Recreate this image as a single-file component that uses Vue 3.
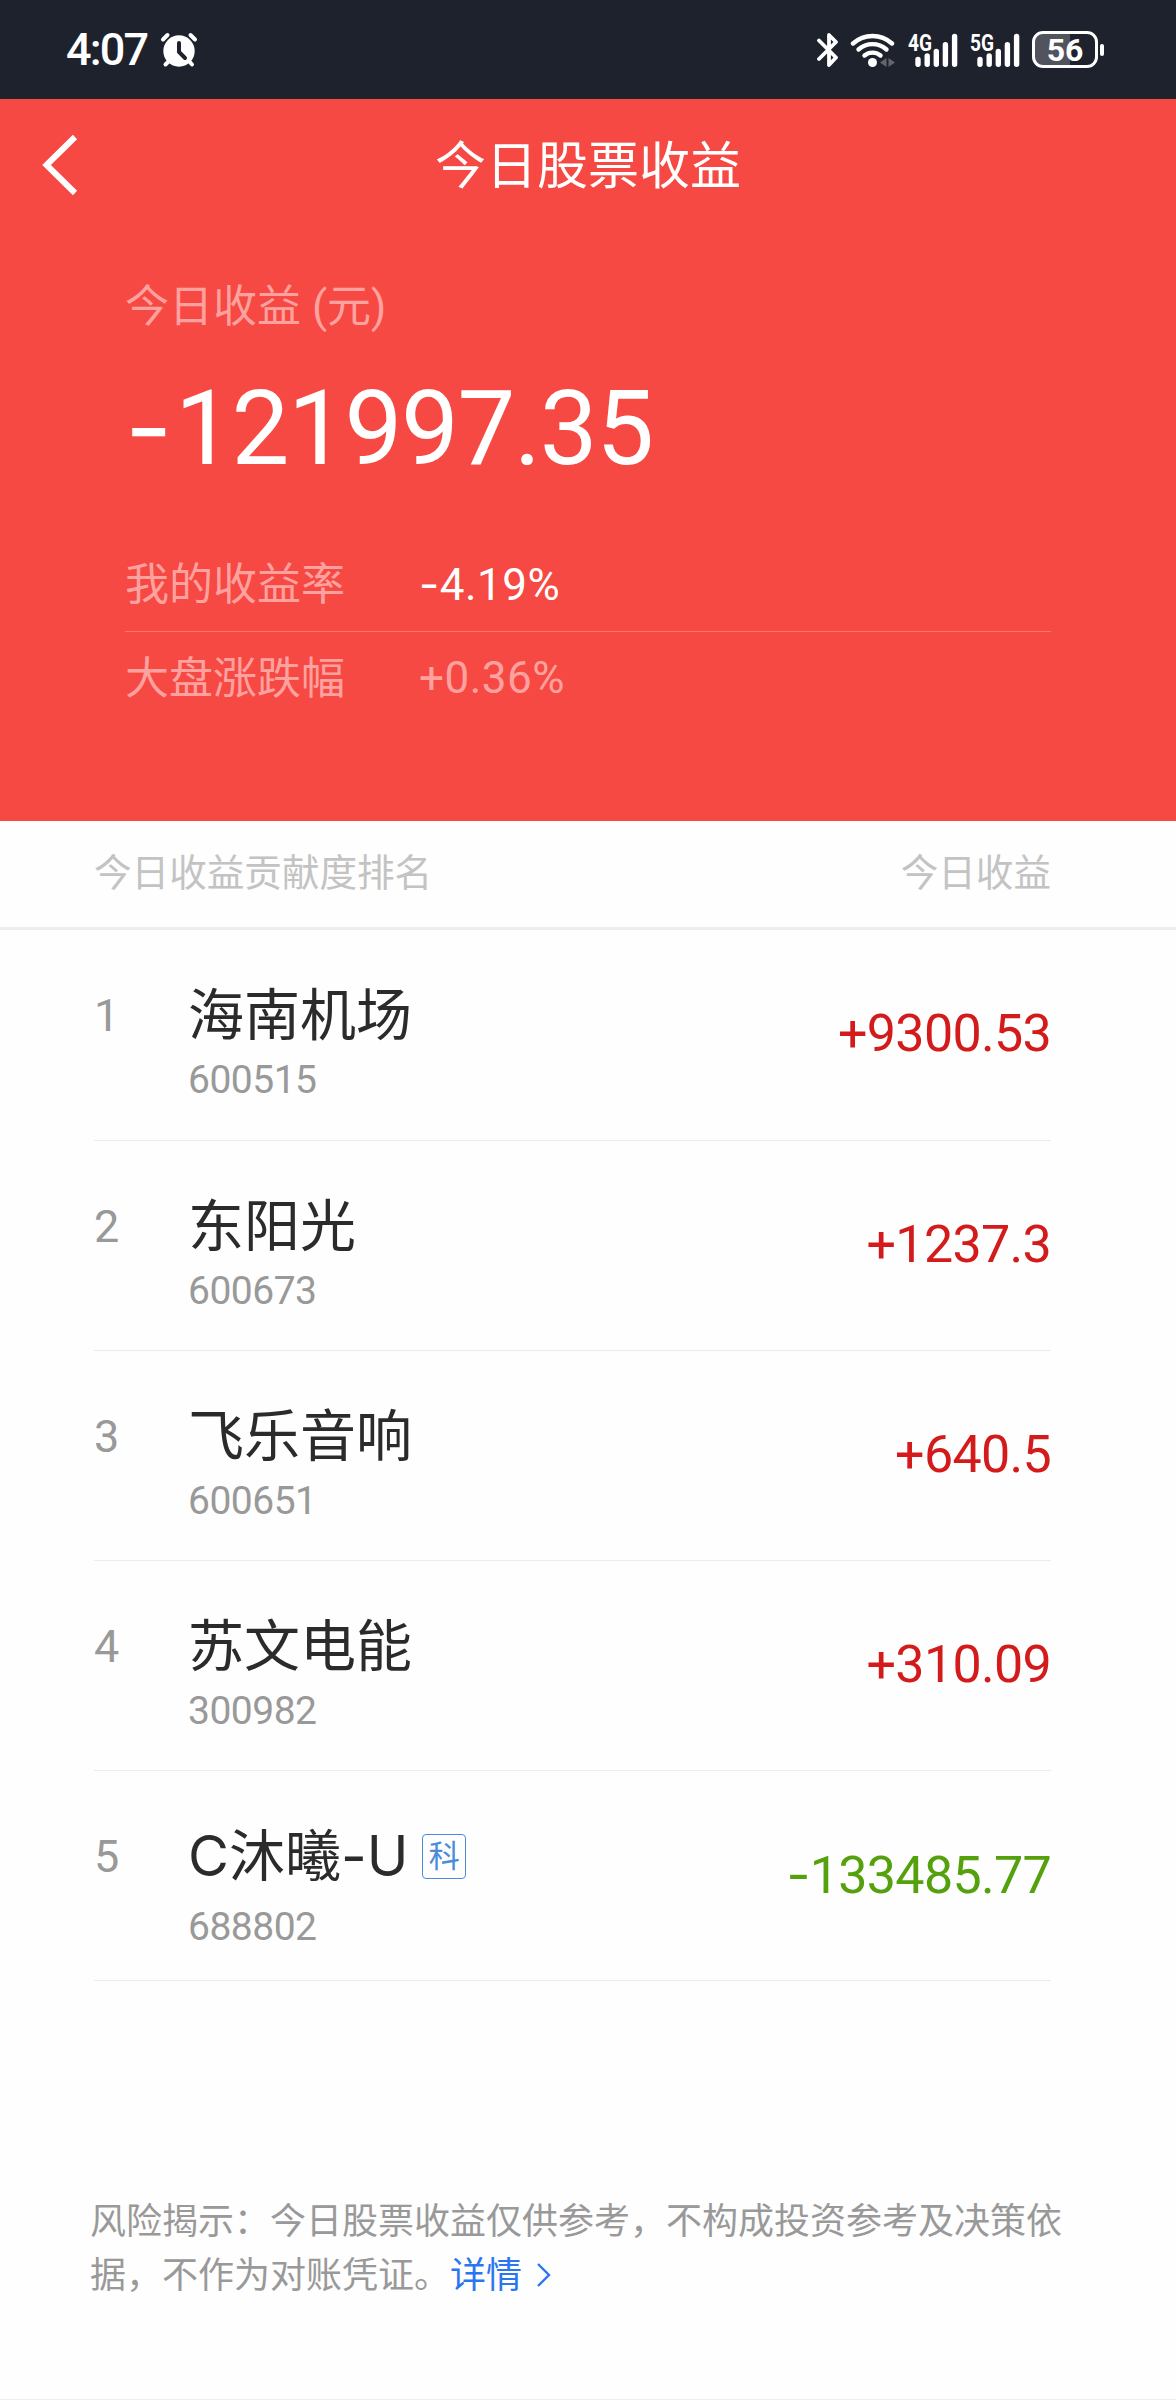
<script setup>
const rates = [
  { label: '我的收益率', sign: '-', value: '4.19%', muted: false },
  { label: '大盘涨跌幅', sign: '+', value: '0.36%', muted: true },
]

const stocks = [
  { name: '海南机场', code: '600515', sign: '+', profit: '9300.53' },
  { name: '东阳光', code: '600673', sign: '+', profit: '1237.3' },
  { name: '飞乐音响', code: '600651', sign: '+', profit: '640.5' },
  { name: '苏文电能', code: '300982', sign: '+', profit: '310.09' },
  { name: 'C沐曦-U', code: '688802', sign: '-', profit: '133485.77', tag: '科' },
]

const networks = ['4G', '5G']
</script>

<template>
  <div class="page">
    <header class="status">
      <span class="time">4:07</span>
      <svg class="alarm" width="38" height="36" viewBox="0 0 38 36">
        <g stroke="#fff" stroke-width="4" stroke-linecap="round">
          <path d="M3 7.5L7.5 3M30.5 3L35 7.5M9 29L5.5 32.5M29 29L32 32.5" />
        </g>
        <circle cx="19" cy="19" r="15.7" fill="#fff" />
        <path d="M19 11V20L25 26" fill="none" stroke="#1e222d" stroke-width="4" stroke-linecap="round" />
      </svg>
      <div class="status-right">
        <svg class="bluetooth" width="22" height="36" viewBox="0 0 22 36">
          <path d="M2 8.5L19 25.5L12 33V3L19 10L2 27" fill="none" stroke="#fff" stroke-width="3.8" stroke-linecap="round" stroke-linejoin="round" />
        </svg>
        <svg class="wifi" width="46" height="36" viewBox="0 0 46 36">
          <g fill="none" stroke="#fff" stroke-width="4.4" stroke-linecap="round">
            <path d="M3 11.5A29 29 0 0 1 42 11.5" />
            <path d="M8.5 17.5A21 21 0 0 1 36.5 17.5" />
            <path d="M14.5 23.5A12.5 12.5 0 0 1 30.5 23.5" />
          </g>
          <circle cx="22.5" cy="30.5" r="4.5" fill="#fff" />
          <path d="M36.5 26V35L30 30.5ZM38.5 26V35L45 30.5Z" fill="#62656d" />
        </svg>
        <svg v-for="net in networks" :key="net" class="signal" width="50" height="48" viewBox="0 -6 50 48">
          <text x="0" y="18.5" textLength="24" lengthAdjust="spacingAndGlyphs">{{ net }}</text>
          <g stroke="#fff" stroke-width="5.4" stroke-linecap="round">
            <path d="M10 27.5V32.2M19.2 24V32.2M28.3 19.5V32.2M37.4 12.8V32.2M46.6 4.5V32.2" />
          </g>
        </svg>
        <div class="battery">
          <div class="cell">56</div>
          <div class="nub"></div>
        </div>
      </div>
    </header>

    <section class="hero">
      <div class="nav">
        <svg class="back" width="40" height="62" viewBox="0 0 40 62">
          <path d="M34 3L5.5 31L34 59" fill="none" stroke="#fff" stroke-width="6" />
        </svg>
        <h1>今日股票收益</h1>
      </div>
      <div class="summary">
        <div class="label">今日收益 (元)</div>
        <div class="total"><span class="minus">-</span>121997.35</div>
        <div v-for="rate in rates" :key="rate.label" class="rate" :class="{ muted: rate.muted }">
          <span class="rate-label">{{ rate.label }}</span>
          <span class="rate-value"><span :class="{ minus: rate.sign === '-' }">{{ rate.sign }}</span>{{ rate.value }}</span>
        </div>
      </div>
    </section>

    <div class="list-head">
      <span>今日收益贡献度排名</span>
      <span>今日收益</span>
    </div>

    <ul class="list">
      <li v-for="(stock, index) in stocks" :key="stock.code" class="row">
        <span class="rank">{{ index + 1 }}</span>
        <div class="stock">
          <div class="name">
            <span>{{ stock.name }}</span>
            <span v-if="stock.tag" class="tag">{{ stock.tag }}</span>
          </div>
          <div class="code" :class="{ lower: stock.tag }">{{ stock.code }}</div>
        </div>
        <div class="profit" :class="{ loss: stock.sign === '-' }">
          <span :class="{ minus: stock.sign === '-' }">{{ stock.sign }}</span>{{ stock.profit }}
        </div>
      </li>
    </ul>

    <footer class="risk">
      风险揭示：今日股票收益仅供参考，不构成投资参考及决策依<br>据，不作为对账凭证。<a class="detail">详情<svg width="16" height="26" viewBox="0 0 16 26"><path d="M2 2L13 13L2 24" fill="none" stroke="#2a76f0" stroke-width="2.4" /></svg></a>
    </footer>
  </div>
</template>

<style>
body {
  margin: 0;
  background: #fefefe;
}
</style>

<style scoped>
.page {
  box-sizing: border-box;
  width: 1176px;
  height: 2400px;
  display: flex;
  flex-direction: column;
  overflow: hidden;
  background: #fefefe;
  border-bottom: 1px solid #eee;
  font-family: Roboto, "Noto Sans CJK SC", sans-serif;
}
.minus {
  font-family: Inter, sans-serif;
}
.status {
  flex: none;
  display: flex;
  align-items: center;
  box-sizing: border-box;
  height: 99px;
  padding: 0 72px 0 66px;
  background: #1e222d;
  color: #fff;
}
.time {
  width: 94px;
  font-size: 45px;
  font-weight: 500;
  line-height: 99px;
  letter-spacing: -1.8px;
}
.status-right {
  display: flex;
  align-items: center;
  margin-left: auto;
}
.wifi {
  margin-left: 11px;
}
.signal {
  margin-left: 12px;
}
.signal text {
  fill: #fff;
  font-size: 24px;
  font-weight: 700;
}
.battery {
  display: flex;
  align-items: center;
  gap: 2px;
  margin-left: 12px;
}
.cell {
  box-sizing: border-box;
  width: 66px;
  height: 37px;
  border: 3px solid #fff;
  border-radius: 11px;
  background: linear-gradient(90deg, #51545d 58%, #1e222d 58%);
  font-size: 32px;
  font-weight: 700;
  line-height: 32px;
  text-align: center;
}
.nub {
  width: 4px;
  height: 12px;
  border-radius: 2px;
  background: #fff;
}
.hero {
  flex: none;
  height: 722px;
  background: #f64943;
  color: #fff;
}
.nav {
  display: grid;
  grid-template-columns: 100px 1fr 100px;
  align-items: center;
  height: 132px;
}
.back {
  margin-left: 41px;
}
h1 {
  margin: 0;
  padding-top: 3px;
  font-size: 51px;
  font-weight: 400;
  line-height: 129px;
  text-align: center;
}
.summary {
  padding: 38px 125px 0;
}
.label {
  font-size: 44px;
  line-height: 76px;
  color: #ffa29f;
}
.total {
  margin-top: 22px;
  font-size: 103px;
  line-height: 120px;
  letter-spacing: -1.4px;
}
.total .minus {
  margin-right: 4px;
}
.rate {
  display: flex;
  height: 92px;
  font-size: 44px;
  line-height: 92px;
}
.total + .rate {
  margin-top: 50px;
  border-bottom: 1px solid #fa7672;
}
.rate-label {
  width: 294px;
  color: #ffa29f;
}
.rate-value {
  line-height: 90px;
  letter-spacing: 0.5px;
}
.muted {
  line-height: 94px;
  color: #ffa29f;
}
.muted .rate-value {
  line-height: 93px;
}
.list-head {
  flex: none;
  display: flex;
  justify-content: space-between;
  height: 106px;
  padding: 0 125px 0 94px;
  border-bottom: 3px solid #eee;
  font-size: 37.6px;
  line-height: 105px;
  color: #c3c3c3;
}
.list {
  flex: none;
  margin: 0;
  padding: 0 125px 0 94px;
  list-style: none;
}
.row {
  display: flex;
  box-sizing: border-box;
  height: 210px;
  border-bottom: 1px solid #ececec;
}
.row:first-child {
  height: 211px;
}
.rank {
  width: 94px;
  padding-top: 56px;
  font-size: 45px;
  line-height: 60px;
  color: #999;
}
.stock {
  padding-top: 51px;
}
.name {
  display: flex;
  align-items: center;
  height: 68px;
  font-family: Inter, "Noto Sans CJK SC", sans-serif;
  font-size: 56px;
  line-height: 68px;
  color: #2b2b2b;
}
.tag {
  box-sizing: border-box;
  width: 44px;
  height: 45px;
  margin-left: 14px;
  border: 1px solid #4a8cdb;
  border-radius: 4px;
  font-size: 31px;
  line-height: 42px;
  text-align: center;
  color: #4a8cdb;
}
.code {
  margin-top: 7px;
  font-size: 39px;
  line-height: 48px;
  letter-spacing: -0.5px;
  color: #999;
}
.code.lower {
  margin-top: 13px;
}
.profit {
  margin-left: auto;
  padding-top: 73px;
  font-size: 52px;
  line-height: 62px;
  letter-spacing: -0.7px;
  color: #d31b1b;
}
.loss {
  color: #55a00d;
}
.risk {
  margin: 214px 0 0 90px;
  font-size: 36px;
  line-height: 54.4px;
  white-space: nowrap;
  color: #999;
}
.detail {
  color: #2a76f0;
}
.detail svg {
  margin-left: 14px;
}
</style>
